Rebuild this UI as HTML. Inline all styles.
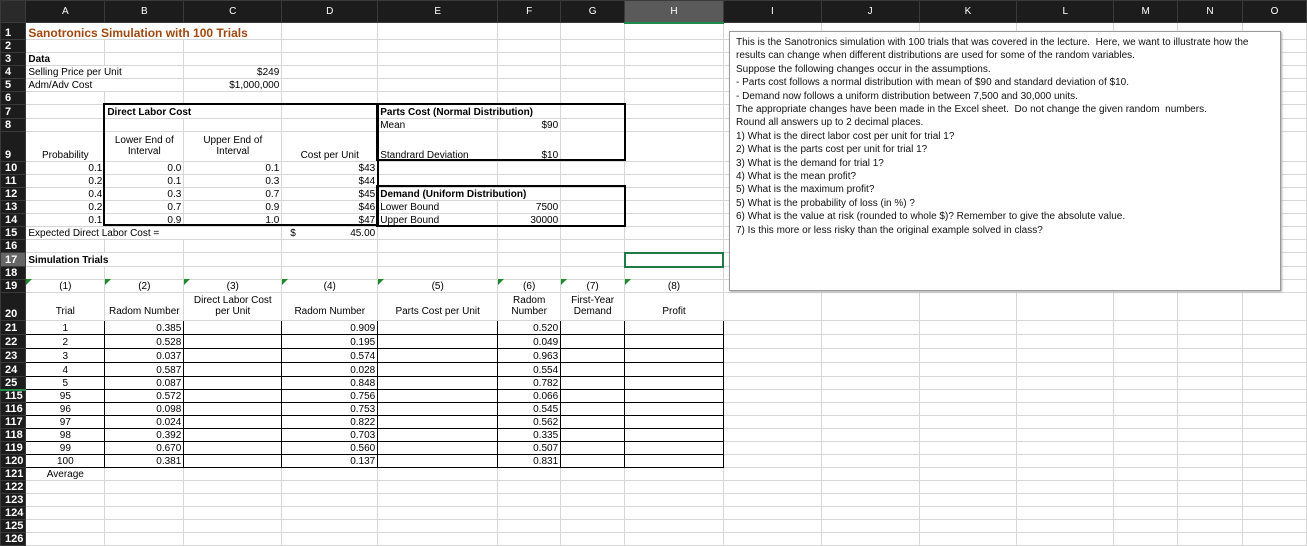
<!DOCTYPE html>
<html><head><meta charset="utf-8"><style>
*{margin:0;padding:0;box-sizing:border-box}
body{width:1307px;height:545px;overflow:hidden;background:#fff;font-family:"Liberation Sans",Arial,sans-serif;font-size:10px;color:#000;position:relative}
table{border-collapse:collapse;table-layout:fixed;position:absolute;left:0;top:0}
td{border:1px solid #d6d6d6;padding:0 2px;white-space:nowrap;overflow:hidden;vertical-align:bottom;line-height:11px}
td.h{background:#1c1c1c;color:#fff;font-weight:bold;font-size:11px;border:1px solid #3a3a3a;padding-left:4px;text-align:left}
td.ov{overflow:visible}
tr.ch td{background:#1c1c1c;color:#fff;text-align:center;font-size:10px;border:1px solid #3a3a3a;vertical-align:middle}
.r{text-align:right}.c{text-align:center}.b{font-weight:bold}
tr.d td{border:1px solid #000}
tr.d td.h{border:1px solid #3a3a3a}
tr.d td.g{border-color:#d6d6d6}
.tri{position:absolute;width:0;height:0;border-top:6px solid #1f8a2a;border-right:6px solid transparent}
.box{position:absolute;border:2px solid #000}
.t2{padding-bottom:4px}
</style></head><body>
<table>
<colgroup><col style="width:25px"><col style="width:79px"><col style="width:79px"><col style="width:98px"><col style="width:96px"><col style="width:120px"><col style="width:63px"><col style="width:64px"><col style="width:99px"><col style="width:98px"><col style="width:98px"><col style="width:98px"><col style="width:97px"><col style="width:64px"><col style="width:65px"><col style="width:64px"></colgroup>
<tr class="ch" style="height:22px"><td style="background:#2a2a2a"></td><td>A</td><td>B</td><td>C</td><td>D</td><td>E</td><td>F</td><td>G</td><td style="background:#5a5a5a;border-bottom:2px solid #1f8a4a">H</td><td>I</td><td>J</td><td>K</td><td>L</td><td>M</td><td>N</td><td>O</td></tr>
<tr style="height:17px"><td class="h">1</td><td colspan="3" class="b ov" style="color:#a0480f;font-size:12px">Sanotronics Simulation with 100 Trials</td><td></td><td></td><td></td><td></td><td></td><td></td><td></td><td></td><td></td><td></td><td></td><td></td></tr>
<tr style="height:13px"><td class="h">2</td><td></td><td></td><td></td><td></td><td></td><td></td><td></td><td></td><td></td><td></td><td></td><td></td><td></td><td></td><td></td></tr>
<tr style="height:13px"><td class="h">3</td><td class="b">Data</td><td></td><td></td><td></td><td></td><td></td><td></td><td></td><td></td><td></td><td></td><td></td><td></td><td></td><td></td></tr>
<tr style="height:13px"><td class="h">4</td><td colspan="2">Selling Price per Unit</td><td class="r">$249</td><td></td><td></td><td></td><td></td><td></td><td></td><td></td><td></td><td></td><td></td><td></td><td></td></tr>
<tr style="height:13px"><td class="h">5</td><td colspan="2">Adm/Adv Cost</td><td class="r">$1,000,000</td><td></td><td></td><td></td><td></td><td></td><td></td><td></td><td></td><td></td><td></td><td></td><td></td></tr>
<tr style="height:13px"><td class="h">6</td><td></td><td></td><td></td><td></td><td></td><td></td><td></td><td></td><td></td><td></td><td></td><td></td><td></td><td></td><td></td></tr>
<tr style="height:14px"><td class="h">7</td><td></td><td colspan="2" class="b">Direct Labor Cost</td><td></td><td colspan="2" class="b">Parts Cost (Normal Distribution)</td><td></td><td></td><td></td><td></td><td></td><td></td><td></td><td></td><td></td></tr>
<tr style="height:13px"><td class="h">8</td><td></td><td></td><td></td><td></td><td>Mean</td><td class="r">$90</td><td></td><td></td><td></td><td></td><td></td><td></td><td></td><td></td><td></td></tr>
<tr style="height:30px"><td class="h">9</td><td class="c">Probability</td><td class="c t2">Lower End of<br>Interval</td><td class="c t2">Upper End of<br>Interval</td><td class="c">Cost per Unit</td><td>Standrard Deviation</td><td class="r">$10</td><td></td><td></td><td></td><td></td><td></td><td></td><td></td><td></td><td></td></tr>
<tr style="height:13px"><td class="h">10</td><td class="r">0.1</td><td class="r">0.0</td><td class="r">0.1</td><td class="r">$43</td><td></td><td></td><td></td><td></td><td></td><td></td><td></td><td></td><td></td><td></td><td></td></tr>
<tr style="height:13px"><td class="h">11</td><td class="r">0.2</td><td class="r">0.1</td><td class="r">0.3</td><td class="r">$44</td><td></td><td></td><td></td><td></td><td></td><td></td><td></td><td></td><td></td><td></td><td></td></tr>
<tr style="height:13px"><td class="h">12</td><td class="r">0.4</td><td class="r">0.3</td><td class="r">0.7</td><td class="r">$45</td><td colspan="2" class="b">Demand (Uniform Distribution)</td><td></td><td></td><td></td><td></td><td></td><td></td><td></td><td></td><td></td></tr>
<tr style="height:13px"><td class="h">13</td><td class="r">0.2</td><td class="r">0.7</td><td class="r">0.9</td><td class="r">$46</td><td>Lower Bound</td><td class="r">7500</td><td></td><td></td><td></td><td></td><td></td><td></td><td></td><td></td><td></td></tr>
<tr style="height:13px"><td class="h">14</td><td class="r">0.1</td><td class="r">0.9</td><td class="r">1.0</td><td class="r">$47</td><td>Upper Bound</td><td class="r">30000</td><td></td><td></td><td></td><td></td><td></td><td></td><td></td><td></td><td></td></tr>
<tr style="height:13px"><td class="h">15</td><td colspan="3">Expected Direct Labor Cost =</td><td class="r"><span style="float:left;padding-left:6px">$</span>45.00</td><td></td><td></td><td></td><td></td><td></td><td></td><td></td><td></td><td></td><td></td><td></td></tr>
<tr style="height:13px"><td class="h">16</td><td></td><td></td><td></td><td></td><td></td><td></td><td></td><td></td><td></td><td></td><td></td><td></td><td></td><td></td><td></td></tr>
<tr style="height:14px"><td class="h" style="background:#666">17</td><td colspan="2" class="b">Simulation Trials</td><td></td><td></td><td></td><td></td><td></td><td style="border:2px solid #1f7a45"></td><td></td><td></td><td></td><td></td><td></td><td></td><td></td></tr>
<tr style="height:13px"><td class="h">18</td><td></td><td></td><td></td><td></td><td></td><td></td><td></td><td></td><td></td><td></td><td></td><td></td><td></td><td></td><td></td></tr>
<tr style="height:13px"><td class="h">19</td><td class="c">(1)</td><td class="c">(2)</td><td class="c">(3)</td><td class="c">(4)</td><td class="c">(5)</td><td class="c">(6)</td><td class="c">(7)</td><td class="c">(8)</td><td></td><td></td><td></td><td></td><td></td><td></td><td></td></tr>
<tr style="height:28px"><td class="h">20</td><td class="c" style="padding-bottom:3px">Trial</td><td class="c" style="padding-bottom:3px">Radom Number</td><td class="c" style="padding-bottom:3px">Direct Labor Cost<br>per Unit</td><td class="c" style="padding-bottom:3px">Radom Number</td><td class="c" style="padding-bottom:3px">Parts Cost per Unit</td><td class="c" style="padding-bottom:3px">Radom<br>Number</td><td class="c" style="padding-bottom:3px">First-Year<br>Demand</td><td class="c" style="padding-bottom:3px">Profit</td><td></td><td></td><td></td><td></td><td></td><td></td><td></td></tr>
<tr class="d" style="height:14px"><td class="h">21</td><td class="c">1</td><td class="r">0.385</td><td></td><td class="r">0.909</td><td></td><td class="r">0.520</td><td></td><td></td><td class="g"></td><td class="g"></td><td class="g"></td><td class="g"></td><td class="g"></td><td class="g"></td><td class="g"></td></tr>
<tr class="d" style="height:14px"><td class="h">22</td><td class="c">2</td><td class="r">0.528</td><td></td><td class="r">0.195</td><td></td><td class="r">0.049</td><td></td><td></td><td class="g"></td><td class="g"></td><td class="g"></td><td class="g"></td><td class="g"></td><td class="g"></td><td class="g"></td></tr>
<tr class="d" style="height:14px"><td class="h">23</td><td class="c">3</td><td class="r">0.037</td><td></td><td class="r">0.574</td><td></td><td class="r">0.963</td><td></td><td></td><td class="g"></td><td class="g"></td><td class="g"></td><td class="g"></td><td class="g"></td><td class="g"></td><td class="g"></td></tr>
<tr class="d" style="height:14px"><td class="h">24</td><td class="c">4</td><td class="r">0.587</td><td></td><td class="r">0.028</td><td></td><td class="r">0.554</td><td></td><td></td><td class="g"></td><td class="g"></td><td class="g"></td><td class="g"></td><td class="g"></td><td class="g"></td><td class="g"></td></tr>
<tr class="d" style="height:13px"><td class="h" style="border-bottom:2px solid #1f8a4a">25</td><td class="c">5</td><td class="r">0.087</td><td></td><td class="r">0.848</td><td></td><td class="r">0.782</td><td></td><td></td><td class="g"></td><td class="g"></td><td class="g"></td><td class="g"></td><td class="g"></td><td class="g"></td><td class="g"></td></tr>
<tr class="d" style="height:13px"><td class="h">115</td><td class="c">95</td><td class="r">0.572</td><td></td><td class="r">0.756</td><td></td><td class="r">0.066</td><td></td><td></td><td class="g"></td><td class="g"></td><td class="g"></td><td class="g"></td><td class="g"></td><td class="g"></td><td class="g"></td></tr>
<tr class="d" style="height:13px"><td class="h">116</td><td class="c">96</td><td class="r">0.098</td><td></td><td class="r">0.753</td><td></td><td class="r">0.545</td><td></td><td></td><td class="g"></td><td class="g"></td><td class="g"></td><td class="g"></td><td class="g"></td><td class="g"></td><td class="g"></td></tr>
<tr class="d" style="height:13px"><td class="h">117</td><td class="c">97</td><td class="r">0.024</td><td></td><td class="r">0.822</td><td></td><td class="r">0.562</td><td></td><td></td><td class="g"></td><td class="g"></td><td class="g"></td><td class="g"></td><td class="g"></td><td class="g"></td><td class="g"></td></tr>
<tr class="d" style="height:13px"><td class="h">118</td><td class="c">98</td><td class="r">0.392</td><td></td><td class="r">0.703</td><td></td><td class="r">0.335</td><td></td><td></td><td class="g"></td><td class="g"></td><td class="g"></td><td class="g"></td><td class="g"></td><td class="g"></td><td class="g"></td></tr>
<tr class="d" style="height:13px"><td class="h">119</td><td class="c">99</td><td class="r">0.670</td><td></td><td class="r">0.560</td><td></td><td class="r">0.507</td><td></td><td></td><td class="g"></td><td class="g"></td><td class="g"></td><td class="g"></td><td class="g"></td><td class="g"></td><td class="g"></td></tr>
<tr class="d" style="height:13px"><td class="h">120</td><td class="c">100</td><td class="r">0.381</td><td></td><td class="r">0.137</td><td></td><td class="r">0.831</td><td></td><td></td><td class="g"></td><td class="g"></td><td class="g"></td><td class="g"></td><td class="g"></td><td class="g"></td><td class="g"></td></tr>
<tr style="height:13px"><td class="h">121</td><td class="c">Average</td><td></td><td></td><td></td><td></td><td></td><td></td><td></td><td></td><td></td><td></td><td></td><td></td><td></td><td></td></tr>
<tr style="height:13px"><td class="h">122</td><td></td><td></td><td></td><td></td><td></td><td></td><td></td><td></td><td></td><td></td><td></td><td></td><td></td><td></td><td></td></tr>
<tr style="height:13px"><td class="h">123</td><td></td><td></td><td></td><td></td><td></td><td></td><td></td><td></td><td></td><td></td><td></td><td></td><td></td><td></td><td></td></tr>
<tr style="height:13px"><td class="h">124</td><td></td><td></td><td></td><td></td><td></td><td></td><td></td><td></td><td></td><td></td><td></td><td></td><td></td><td></td><td></td></tr>
<tr style="height:13px"><td class="h">125</td><td></td><td></td><td></td><td></td><td></td><td></td><td></td><td></td><td></td><td></td><td></td><td></td><td></td><td></td><td></td></tr>
<tr style="height:13px"><td class="h">126</td><td></td><td></td><td></td><td></td><td></td><td></td><td></td><td></td><td></td><td></td><td></td><td></td><td></td><td></td><td></td></tr>
</table>
<div class="box" style="left:103px;top:103px;width:276px;height:123px"></div>
<div class="box" style="left:376px;top:103px;width:250px;height:58px"></div>
<div class="box" style="left:376px;top:185px;width:250px;height:42px"></div>
<div class="tri" style="left:26px;top:279px"></div><div class="tri" style="left:105px;top:279px"></div><div class="tri" style="left:184px;top:279px"></div><div class="tri" style="left:282px;top:279px"></div><div class="tri" style="left:378px;top:279px"></div><div class="tri" style="left:498px;top:279px"></div><div class="tri" style="left:561px;top:279px"></div><div class="tri" style="left:625px;top:279px"></div>
<div style="position:absolute;left:729px;top:31px;width:552px;height:260px;background:#fff;border:1px solid #9a9a9a;box-shadow:1px 1px 2px #aaa;padding:4px 0 0 6px;font-size:10px;line-height:13.4px;font-family:'Liberation Sans',Arial,sans-serif;color:#111;white-space:nowrap">
This is the Sanotronics simulation with 100 trials that was covered in the lecture.&nbsp; Here, we want to illustrate how the<br>
results can change when different distributions are used for some of the random variables.<br>
Suppose the following changes occur in the assumptions.<br>
- Parts cost follows a normal distribution with mean of $90 and standard deviation of $10.<br>
- Demand now follows a uniform distribution between 7,500 and 30,000 units.<br>
The appropriate changes have been made in the Excel sheet.&nbsp; Do not change the given random&nbsp; numbers.<br>
Round all answers up to 2 decimal places.<br>
1) What is the direct labor cost per unit for trial 1?<br>
2) What is the parts cost per unit for trial 1?<br>
3) What is the demand for trial 1?<br>
4) What is the mean profit?<br>
5) What is the maximum profit?<br>
5) What is the probability of loss (in %) ?<br>
6) What is the value at risk (rounded to whole $)? Remember to give the absolute value.<br>
7) Is this more or less risky than the original example solved in class?
</div>
</body></html>
